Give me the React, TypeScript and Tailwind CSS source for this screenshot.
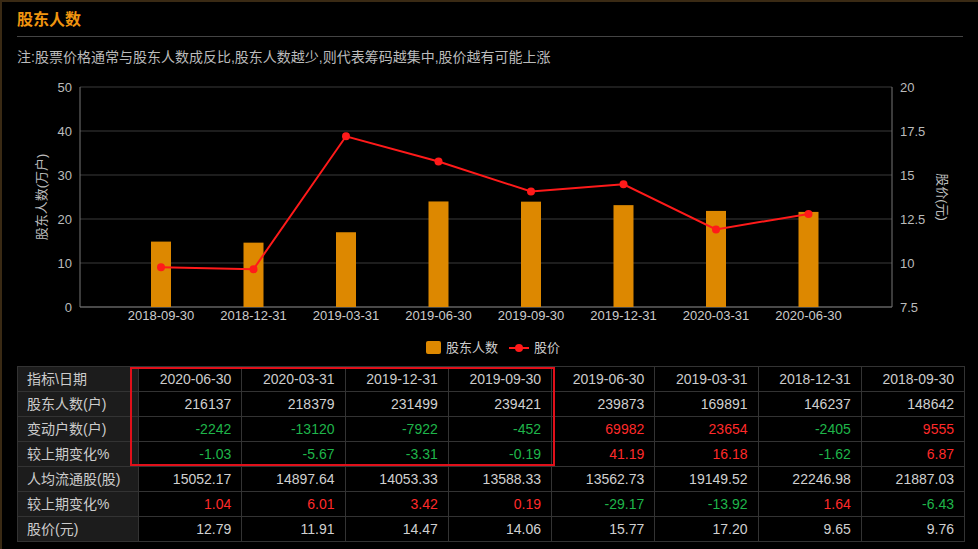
import React from "react";

const cats = ["2018-09-30","2018-12-31","2019-03-31","2019-06-30","2019-09-30","2019-12-31","2020-03-31","2020-06-30"];
const bars = [14.8642,14.6237,16.9891,23.9873,23.9421,23.1499,21.8379,21.6137];
const prices = [9.76,9.65,17.2,15.77,14.06,14.47,11.91,12.79];
const cx = (i:number)=>159+i*92.5;
const yl = (v:number)=>307-v*4.4;
const yr = (p:number)=>307-(p-7.5)*17.6;

const cols = ["2020-06-30","2020-03-31","2019-12-31","2019-09-30","2019-06-30","2019-03-31","2018-12-31","2018-09-30"];
type Cell = [string, string];
const G="text-[#1fb54a]", R="text-[#ff2a2a]", W="text-[#d0d0d0]";
const rows: {label:string; cells:Cell[]}[] = [
  {label:"股东人数(户)", cells:["216137","218379","231499","239421","239873","169891","146237","148642"].map(v=>[v,W] as Cell)},
  {label:"变动户数(户)", cells:[["-2242",G],["-13120",G],["-7922",G],["-452",G],["69982",R],["23654",R],["-2405",G],["9555",R]]},
  {label:"较上期变化%", cells:[["-1.03",G],["-5.67",G],["-3.31",G],["-0.19",G],["41.19",R],["16.18",R],["-1.62",G],["6.87",R]]},
  {label:"人均流通股(股)", cells:["15052.17","14897.64","14053.33","13588.33","13562.73","19149.52","22246.98","21887.03"].map(v=>[v,W] as Cell)},
  {label:"较上期变化%", cells:[["1.04",R],["6.01",R],["3.42",R],["0.19",R],["-29.17",G],["-13.92",G],["1.64",R],["-6.43",G]]},
  {label:"股价(元)", cells:["12.79","11.91","14.47","14.06","15.77","17.20","9.65","9.76"].map(v=>[v,W] as Cell)},
];

export default function App(){
  const font = {fontFamily:'"Liberation Sans","Noto Sans CJK SC",sans-serif'};
  return (
    <div className="w-[978px] h-[549px] bg-black border-t-2 border-l-2 border-[#3a2a14] overflow-hidden" style={font}>
      <div className="px-[15px]">
        <div className="h-[35px] flex items-center pt-[2px] text-[#f0950f] text-[16px] font-bold border-b border-[#444]">股东人数</div>
        <div className="h-[40px] flex items-center text-[#bbbbbb] text-[14px]">注:股票价格通常与股东人数成反比,股东人数越少,则代表筹码越集中,股价越有可能上涨</div>
      </div>
      <svg width="976" height="289" viewBox="0 77 976 289" className="block" style={font}>
        {[0,10,20,30,40,50].map(v=>(
          <g key={v}>
            <line x1={78} x2={890} y1={yl(v)} y2={yl(v)} stroke="#3a3a3a"/>
            <text x={70} y={yl(v)+5} fill="#bbb" fontSize="13" textAnchor="end">{v}</text>
          </g>
        ))}
        {["7.5","10","12.5","15","17.5","20"].map((t,i)=>(
          <text key={t} x={898} y={307-i*44+5} fill="#bbb" fontSize="13">{t}</text>
        ))}
        <line x1={78} x2={78} y1={87} y2={307} stroke="#777"/>
        <line x1={890} x2={890} y1={87} y2={307} stroke="#777"/>
        <line x1={78} x2={890} y1={307} y2={307} stroke="#777"/>
        <text transform="translate(44,197) rotate(-90)" fill="#bbb" fontSize="13" textAnchor="middle">股东人数(万户)</text>
        <text transform="translate(936,197) rotate(90)" fill="#bbb" fontSize="13" textAnchor="middle">股价(元)</text>
        {bars.map((b,i)=>(<rect key={i} x={cx(i)-10} y={yl(b)} width={20} height={307-yl(b)} fill="#dd8800"/>))}
        <polyline points={prices.map((p,i)=>`${cx(i)},${yr(p)}`).join(" ")} fill="none" stroke="#ff1a1a" strokeWidth="2"/>
        {prices.map((p,i)=>(<circle key={i} cx={cx(i)} cy={yr(p)} r={4} fill="#ff1a1a"/>))}
        {cats.map((c,i)=>(<text key={c} x={cx(i)} y={320} fill="#ccc" fontSize="13" textAnchor="middle">{c}</text>))}
        <rect x={424} y={341} width={15} height={13} fill="#dd8800" rx="2"/>
        <text x={444} y={352} fill="#ccc" fontSize="13">股东人数</text>
        <line x1={507} x2={527} y1={348} y2={348} stroke="#ff1a1a" strokeWidth="2"/>
        <circle cx={517} cy={348} r={4} fill="#ff1a1a"/>
        <text x={532} y={352} fill="#ccc" fontSize="13">股价</text>
      </svg>
      <div className="relative ml-[15px] w-[948px]">
        <table className="border-collapse text-[14px] w-[948px] table-fixed">
          <colgroup>
            <col className="w-[121px]"/>
            {cols.map(c=><col key={c}/>)}
          </colgroup>
          <tbody>
            <tr className="h-[25px]">
              <td className="border border-[#333] bg-[#1c1c1c] text-[#ccc] pl-[9px]">指标\日期</td>
              {cols.map(c=><td key={c} className="border border-[#333] text-right pr-[10px] text-[#ccc]">{c}</td>)}
            </tr>
            {rows.map((r,ri)=>(
              <tr key={ri} className="h-[25px]">
                <td className="border border-[#333] bg-[#1c1c1c] text-[#ccc] pl-[9px] whitespace-nowrap">{r.label}</td>
                {r.cells.map(([v,c],ci)=><td key={ci} className={`border border-[#333] text-right pr-[10px] ${c}`}>{v}</td>)}
              </tr>
            ))}
          </tbody>
        </table>
        <div className="absolute left-[113px] top-[1px] w-[425px] h-[99px] border-2 border-[#e0101a] pointer-events-none"/>
      </div>
    </div>
  );
}
